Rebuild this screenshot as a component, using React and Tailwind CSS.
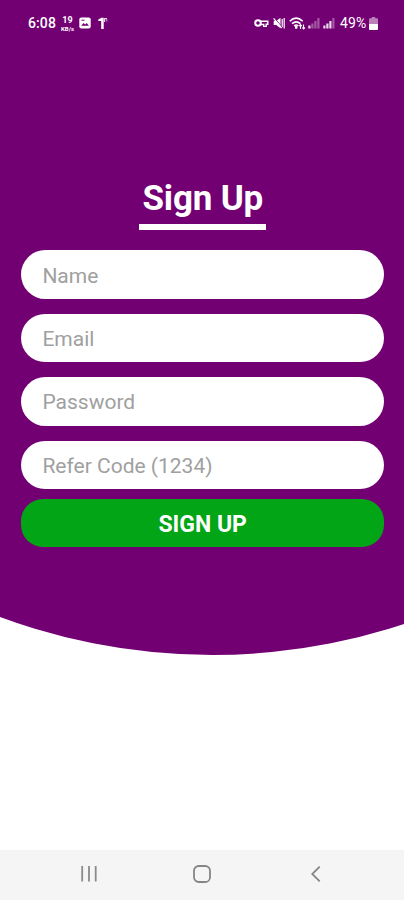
import { useState } from 'react'

const fields = [
  { name: 'name', type: 'text', placeholder: 'Name' },
  { name: 'email', type: 'email', placeholder: 'Email' },
  { name: 'password', type: 'password', placeholder: 'Password' },
  { name: 'referCode', type: 'text', placeholder: 'Refer Code (1234)' }
]

function SignalIcon({ className, level }) {
  return (
    <svg viewBox="0 0 12 12" className={className} fill="white">
      {[3, 5, 7.5, 10.5].map((h, i) => (
        <rect key={h} x={i * 3 + 0.3} y={11.5 - h} width="2.2" height={h} opacity={i < level ? 0.85 : 0.35} />
      ))}
    </svg>
  )
}

function StatusBar() {
  return (
    <div className="flex h-[46px] items-center text-[14px] leading-none text-white">
      <span className="ml-[28px] w-[29px] font-medium tracking-[0.1px]">6:08</span>
      <div className="ml-[3px] flex w-[15px] flex-col items-center font-bold leading-none">
        <span className="text-[9px] leading-[10px]">19</span>
        <span className="text-[6px] leading-[7px]">KB/s</span>
      </div>
      <svg viewBox="0 0 12 12" className="ml-[4px] h-[12px] w-[12px]">
        <rect x="0.3" y="0.5" width="11.4" height="11" rx="2" fill="white" />
        <path d="M2.2 8.8 4.5 6l1.6 1.6L7.7 6l2.2 2.8z" fill="#730073" />
        <path d="M2.5 3.2h3" stroke="#730073" strokeWidth="1" />
      </svg>
      <svg viewBox="0 0 10 12" className="ml-[7px] h-[12px] w-[10px]" fill="white">
        <path d="M.3 2.6 3.4.8h2.3V12H3.2V4H.3z" />
        <path d="M6 1h3v1.2H7.2V5H6z" opacity=".8" />
        <path d="M8.3 2h1v2.6h-1z" opacity=".6" />
      </svg>

      <svg viewBox="0 0 15 10" className="ml-auto h-[10px] w-[15px]" fill="none" stroke="white">
        <circle cx="4" cy="5" r="2.8" strokeWidth="2" />
        <path d="M6.5 3.2h7.3v3h-1.6v2.2H9.7V6.5H6.8" strokeWidth="1.4" />
      </svg>
      <svg viewBox="0 0 12 12" className="ml-[4px] h-[12px] w-[12px]">
        <path d="M.7 4h2.5L7.5.7v10.6L3.2 8H.7z" fill="white" />
        <path d="M9.2 2v8M11.2 1v10.5" stroke="white" strokeWidth="1.2" />
        <path d="M1.3.8l8 9.6" stroke="#730073" strokeWidth="1" />
        <path d="M.6 1.4l8.2 9.8" stroke="white" strokeWidth="1.3" />
      </svg>
      <svg viewBox="0 0 17 13" className="ml-[4px] h-[13px] w-[17px]" fill="none" stroke="white">
        <path d="M.7 4.3Q7.2-2 13.7 4.3" strokeWidth="1.6" />
        <path d="M3 6.7q4.2-3.8 8.4 0" strokeWidth="1.6" />
        <path d="M5.1 9q2.1-2 4.2 0" strokeWidth="1.6" />
        <path d="M7.2 9v2.7" strokeWidth="2.4" />
        <path d="M11.5 12V7.5m-1.4 1.6 1.4-1.6 1.3 1.6M14.5 7.5V12m-1.3-1.5 1.3 1.5 1.4-1.5" strokeWidth="1.1" />
      </svg>
      <SignalIcon className="ml-[2px] h-[12px] w-[12px]" level={1} />
      <SignalIcon className="ml-[3px] h-[12px] w-[12px]" level={3} />
      <span className="ml-[5px] w-[28px] tracking-[0.1px]">49%</span>
      <svg viewBox="0 0 9 13" className="ml-[1px] mr-[26px] h-[13px] w-[9px]" fill="white">
        <path d="M2.8 0h3.4v1.3H8q1 0 1 1V7H0V2.3q0-1 1-1h1.8z" opacity=".5" />
        <path d="M0 7h9v5q0 1-1 1H1q-1 0-1-1z" />
      </svg>
    </div>
  )
}

function NavigationBar() {
  return (
    <nav className="flex h-[50px] items-center bg-[#f5f5f5] pb-[2px]">
      <button type="button" aria-label="Recent apps" className="ml-[80px]">
        <svg viewBox="0 0 18 18" className="h-[18px] w-[18px]" stroke="#8b8b8b" strokeWidth="1.8">
          <path d="M2.2 1v15.5M9 1v15.5M15.7 1v15.5" />
        </svg>
      </button>
      <button type="button" aria-label="Home" className="ml-[95px]">
        <svg viewBox="0 0 18 18" className="h-[18px] w-[18px]" fill="none" stroke="#858585" strokeWidth="1.8">
          <rect x="1" y="1" width="16" height="16" rx="4.8" />
        </svg>
      </button>
      <button type="button" aria-label="Back" className="ml-[100px]">
        <svg viewBox="0 0 10 18" className="h-[18px] w-[10px]" fill="none" stroke="#858585" strokeWidth="1.8">
          <path d="M8.7 1.7 1.2 9l7.5 7.3" />
        </svg>
      </button>
    </nav>
  )
}

export default function App() {
  const [form, setForm] = useState({ name: '', email: '', password: '', referCode: '' })

  const handleChange = (e) => {
    setForm({ ...form, [e.target.name]: e.target.value })
  }

  return (
    <div className="flex h-[900px] w-[404px] flex-col justify-between overflow-hidden bg-white font-['Roboto',sans-serif]">
      {/* the clip gives the panel its curved bottom edge */}
      <main className="h-[655px] bg-[#730073] [clip-path:circle(610px_at_212px_45px)]">
        <StatusBar />
        <h1 className="mx-auto mt-[130px] h-[54.4px] w-[127px] border-b-[6px] border-white pl-[1.5px] text-center text-[35px] font-bold leading-[45px] tracking-[-0.2px] text-white">
          Sign Up
        </h1>
        <form className="mt-[20px] pl-[21.4px] pr-[20px]" onSubmit={(e) => e.preventDefault()}>
          <div className="flex flex-col gap-[14.9px]">
            {fields.map((field) => (
              <input
                key={field.name}
                name={field.name}
                type={field.type}
                placeholder={field.placeholder}
                value={form[field.name]}
                onChange={handleChange}
                className="h-[48.5px] w-full rounded-full bg-white px-[21px] pt-[2px] text-[21px] text-gray-800 outline-none placeholder:text-[#a0a0a0]"
              />
            ))}
          </div>
          <button
            type="submit"
            className="mt-[9.5px] block h-[48.5px] w-full rounded-[22px] bg-[#02a516] pt-[4px] text-[23px] font-bold text-white"
          >
            SIGN UP
          </button>
        </form>
      </main>
      <NavigationBar />
    </div>
  )
}
